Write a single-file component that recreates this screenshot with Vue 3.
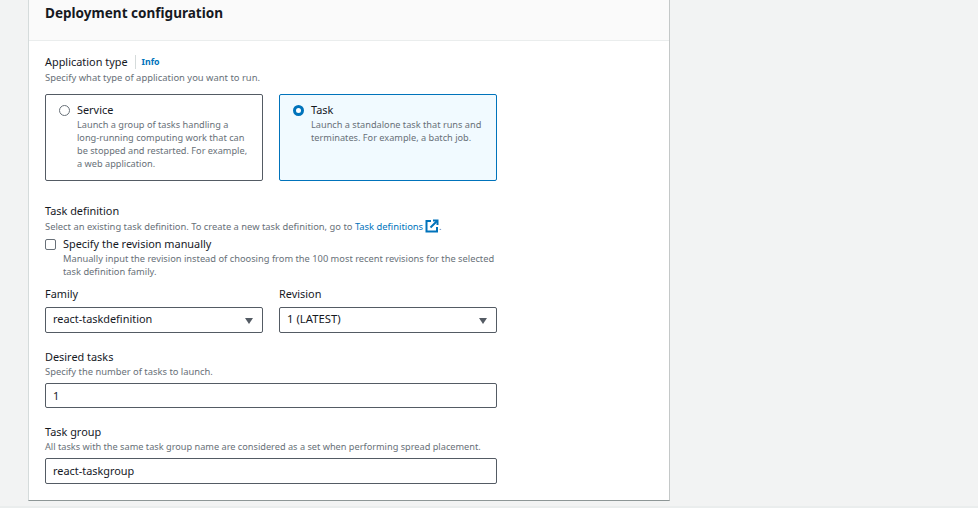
<script setup>
const tiles = [
  { name: 'Service', desc: 'Launch a group of tasks handling a long-running computing work that can be stopped and restarted. For example, a web application.', on: false },
  { name: 'Task', desc: 'Launch a standalone task that runs and terminates. For example, a batch job.', on: true }
]
</script>

<template>
  <div class="page">
    <section class="card">
      <header class="head"><h2>Deployment configuration</h2></header>
      <div class="body">
        <div class="label-row"><span class="label">Application type</span><a class="info">Info</a></div>
        <p class="desc d-app">Specify what type of application you want to run.</p>
        <div class="tiles">
          <div v-for="t in tiles" :key="t.name" class="tile" :class="{ on: t.on }">
            <span class="radio"></span>
            <div>
              <div class="tname">{{ t.name }}</div>
              <div class="tdesc">{{ t.desc }}</div>
            </div>
          </div>
        </div>

        <div class="label l-taskdef">Task definition</div>
        <p class="desc d-def">Select an existing task definition. To create a new task definition, go to <a class="link">Task definitions</a>
          <svg class="ext" width="14" height="14" viewBox="0 0 14 14" fill="none" stroke="#0073bb" stroke-width="2"><path d="M6 2H1.500v10.500H12V8"/><path d="M8 1.500h4.500V6"/><path d="M12 2 5.500 8.500"/></svg>.</p>
        <div class="check">
          <span class="box"></span>
          <div>
            <div class="cname">Specify the revision manually</div>
            <div class="cdesc">Manually input the revision instead of choosing from the 100 most recent revisions for the selected task definition family.</div>
          </div>
        </div>
        <div class="selects">
          <div class="col">
            <div class="label">Family</div>
            <div class="select"><span>react-taskdefinition</span><i class="caret"></i></div>
          </div>
          <div class="col">
            <div class="label">Revision</div>
            <div class="select"><span class="latest">1 (LATEST)</span><i class="caret"></i></div>
          </div>
        </div>

        <div class="label l-desired">Desired tasks</div>
        <p class="desc d-num">Specify the number of tasks to launch.</p>
        <div class="input short">1</div>

        <div class="label l-group">Task group</div>
        <p class="desc d-group">All tasks with the same task group name are considered as a set when performing spread placement.</p>
        <div class="input tall">react-taskgroup</div>
      </div>
    </section>
    <div class="foot"></div>
  </div>
</template>

<style scoped>
.page {
  width: 978px;
  height: 508px;
  overflow: hidden;
  background: #f2f3f3;
  color: #16191f;
  font-family: "Noto Sans", sans-serif;
  font-size: 10.900px;
  padding-left: 28px;
  box-sizing: border-box;
  position: relative;
}
.card {
  width: 642px;
  height: 501px;
  box-sizing: border-box;
  background: #fff;
  border-left: 1px solid #d5dbdb;
  border-right: 1px solid #c4c8c8;
  border-bottom: 1px solid #8d9696;
}
.head {
  height: 41px;
  box-sizing: border-box;
  background: #fafafa;
  border-bottom: 1px solid #eaeded;
  padding: 4px 16px 0;
}
h2 {
  margin: 0;
  font-size: 13.550px;
  line-height: 19px;
  font-weight: 700;
}
.body { padding: 12px 16px 0; width: 452px; }
.label { font-size: 10.900px; line-height: 16px; height: 16px; }
.label-row { display: flex; align-items: center; height: 18px; }
.info {
  color: #0073bb;
  font-weight: 700;
  font-size: 8.800px;
  margin-left: 7px;
  padding-left: 6px;
  border-left: 1px solid #d5dbdb;
  line-height: 14px;
}
.desc {
  margin: 0;
  color: #687078;
  font-size: 9.300px;
  line-height: 13px;
  white-space: nowrap;
}
.d-app { font-size: 9.420px; }
.d-def { font-size: 9.370px; }
.d-num { font-size: 9.370px; line-height: 14px; }
.d-group { font-size: 9.200px; }
.tiles { display: flex; gap: 16px; margin-top: 10px; }
.tile {
  width: 218px;
  height: 87px;
  box-sizing: border-box;
  border: 1px solid #545b64;
  border-radius: 2px;
  padding: 7px 13px;
  display: flex;
  gap: 7px;
}
.tile.on { border-color: #0073bb; background: #f1faff; }
.radio {
  width: 11px;
  height: 11px;
  box-sizing: border-box;
  border: 1px solid #687078;
  border-radius: 50%;
  margin-top: 3px;
  flex: none;
  background: #fff;
}
.tile.on .radio { border: 3.500px solid #0073bb; }
.tname { font-size: 10.900px; line-height: 15px; }
.tdesc { color: #687078; font-size: 9.200px; line-height: 13px; margin-top: 1px; }
.l-taskdef { margin-top: 22px; }
.link { color: #0073bb; }
.ext { vertical-align: -3px; margin-left: 2px; }
.check { display: flex; gap: 7px; margin-top: 3px; }
.box {
  width: 11px;
  height: 11px;
  box-sizing: border-box;
  border: 1px solid #687078;
  border-radius: 2px;
  margin-top: 3px;
  flex: none;
}
.cname { font-size: 10.900px; line-height: 15px; }
.cdesc { color: #687078; font-size: 9.300px; line-height: 13px; margin-top: 1px; }
.selects { display: flex; gap: 16px; margin-top: 8px; }
.col { width: 218px; }
.select, .input {
  height: 26px;
  box-sizing: border-box;
  border: 1px solid #545b64;
  border-radius: 2px;
  padding: 0 7px;
  font-size: 10.900px;
  display: flex;
  align-items: center;
  justify-content: space-between;
}
.select { margin-top: 5px; padding-bottom: 4px; }
.latest { font-size: 11.300px; }
.input.short { height: 25px; margin-top: 4px; }
.input.tall { margin-top: 5px; padding-bottom: 1px; }
.caret {
  width: 0;
  height: 0;
  border-left: 4px solid transparent;
  border-right: 4px solid transparent;
  border-top: 6.500px solid #545b64;
  margin-right: 2px;
  margin-top: 6px;
}
.l-desired { margin-top: 16px; }
.l-group { margin-top: 16px; }
.foot {
  position: absolute;
  left: 0;
  right: 0;
  bottom: 0;
  height: 2px;
  background: #eaeded;
}
</style>
